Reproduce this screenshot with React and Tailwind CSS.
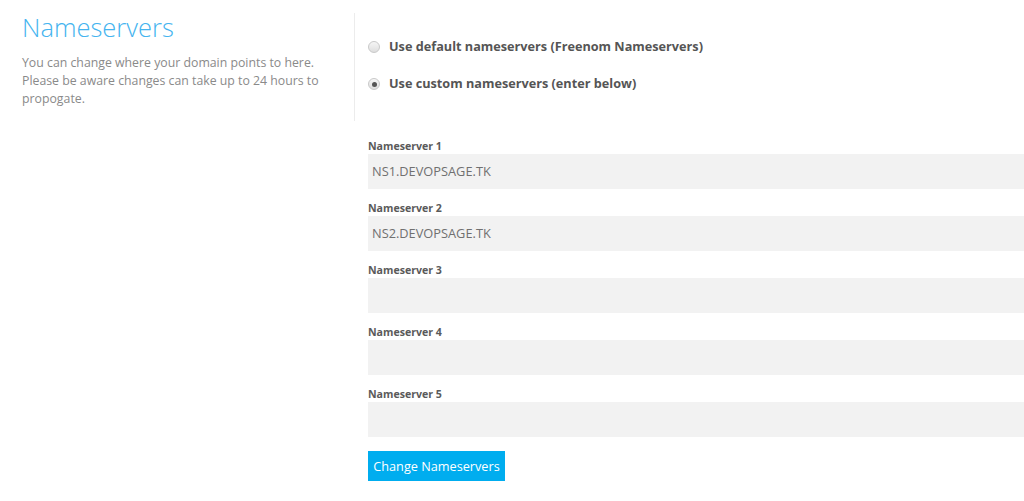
const font = { fontFamily: '"Open Sans", "Noto Sans", sans-serif' };

const servers = ["NS1.DEVOPSAGE.TK", "NS2.DEVOPSAGE.TK", "", "", ""];

const Radio = ({ checked, label }) => (
  <div className="flex items-center h-[20px]">
    <span className="ml-[13px] w-[12px] h-[12px] rounded-full border border-[#c9c9c9] bg-gradient-to-b from-[#f6f6f6] to-[#dedede] flex items-center justify-center">
      {checked && <span className="w-[5px] h-[5px] rounded-full bg-[#555]" />}
    </span>
    <span className="ml-[9px] text-[12.7px] font-bold text-[#555]">{label}</span>
  </div>
);

export default function App() {
  return (
    <div className="w-[1024px] h-[501px] bg-white overflow-hidden" style={font}>
      <div className="flex">
        <div className="w-[354px] pl-[22px] pt-[9px]">
          <h1 className="text-[25.5px] font-light text-[#45b4ef] leading-[36px]">Nameservers</h1>
          <p className="mt-[9px] text-[12.3px] leading-[18px] text-[#8a8a8a] pr-[10px]">
            You can change where your domain points to here. Please be aware changes can take up to 24 hours to propogate.
          </p>
        </div>
        <div className="mt-[13px] h-[108px] border-l border-[#ececec] pt-[24px] flex flex-col gap-[17px]">
          <Radio label="Use default nameservers (Freenom Nameservers)" />
          <Radio checked label="Use custom nameservers (enter below)" />
        </div>
      </div>

      <div className="ml-[368px] mt-[17px]">
        {servers.map((ns, i) => (
          <div key={i} className="mb-[11px]">
            <div className="text-[10.6px] font-bold text-[#5a5a5a] leading-[16px]">Nameserver {i + 1}</div>
            <div className="h-[35px] bg-[#f2f2f2] flex items-center pl-[4px] text-[12.8px] text-[#707070]">{ns}</div>
          </div>
        ))}
        <button className="mt-[3px] h-[30px] w-[137px] bg-[#00adef] text-white text-[12.7px] leading-[30px] text-center">
          Change Nameservers
        </button>
      </div>
    </div>
  );
}
